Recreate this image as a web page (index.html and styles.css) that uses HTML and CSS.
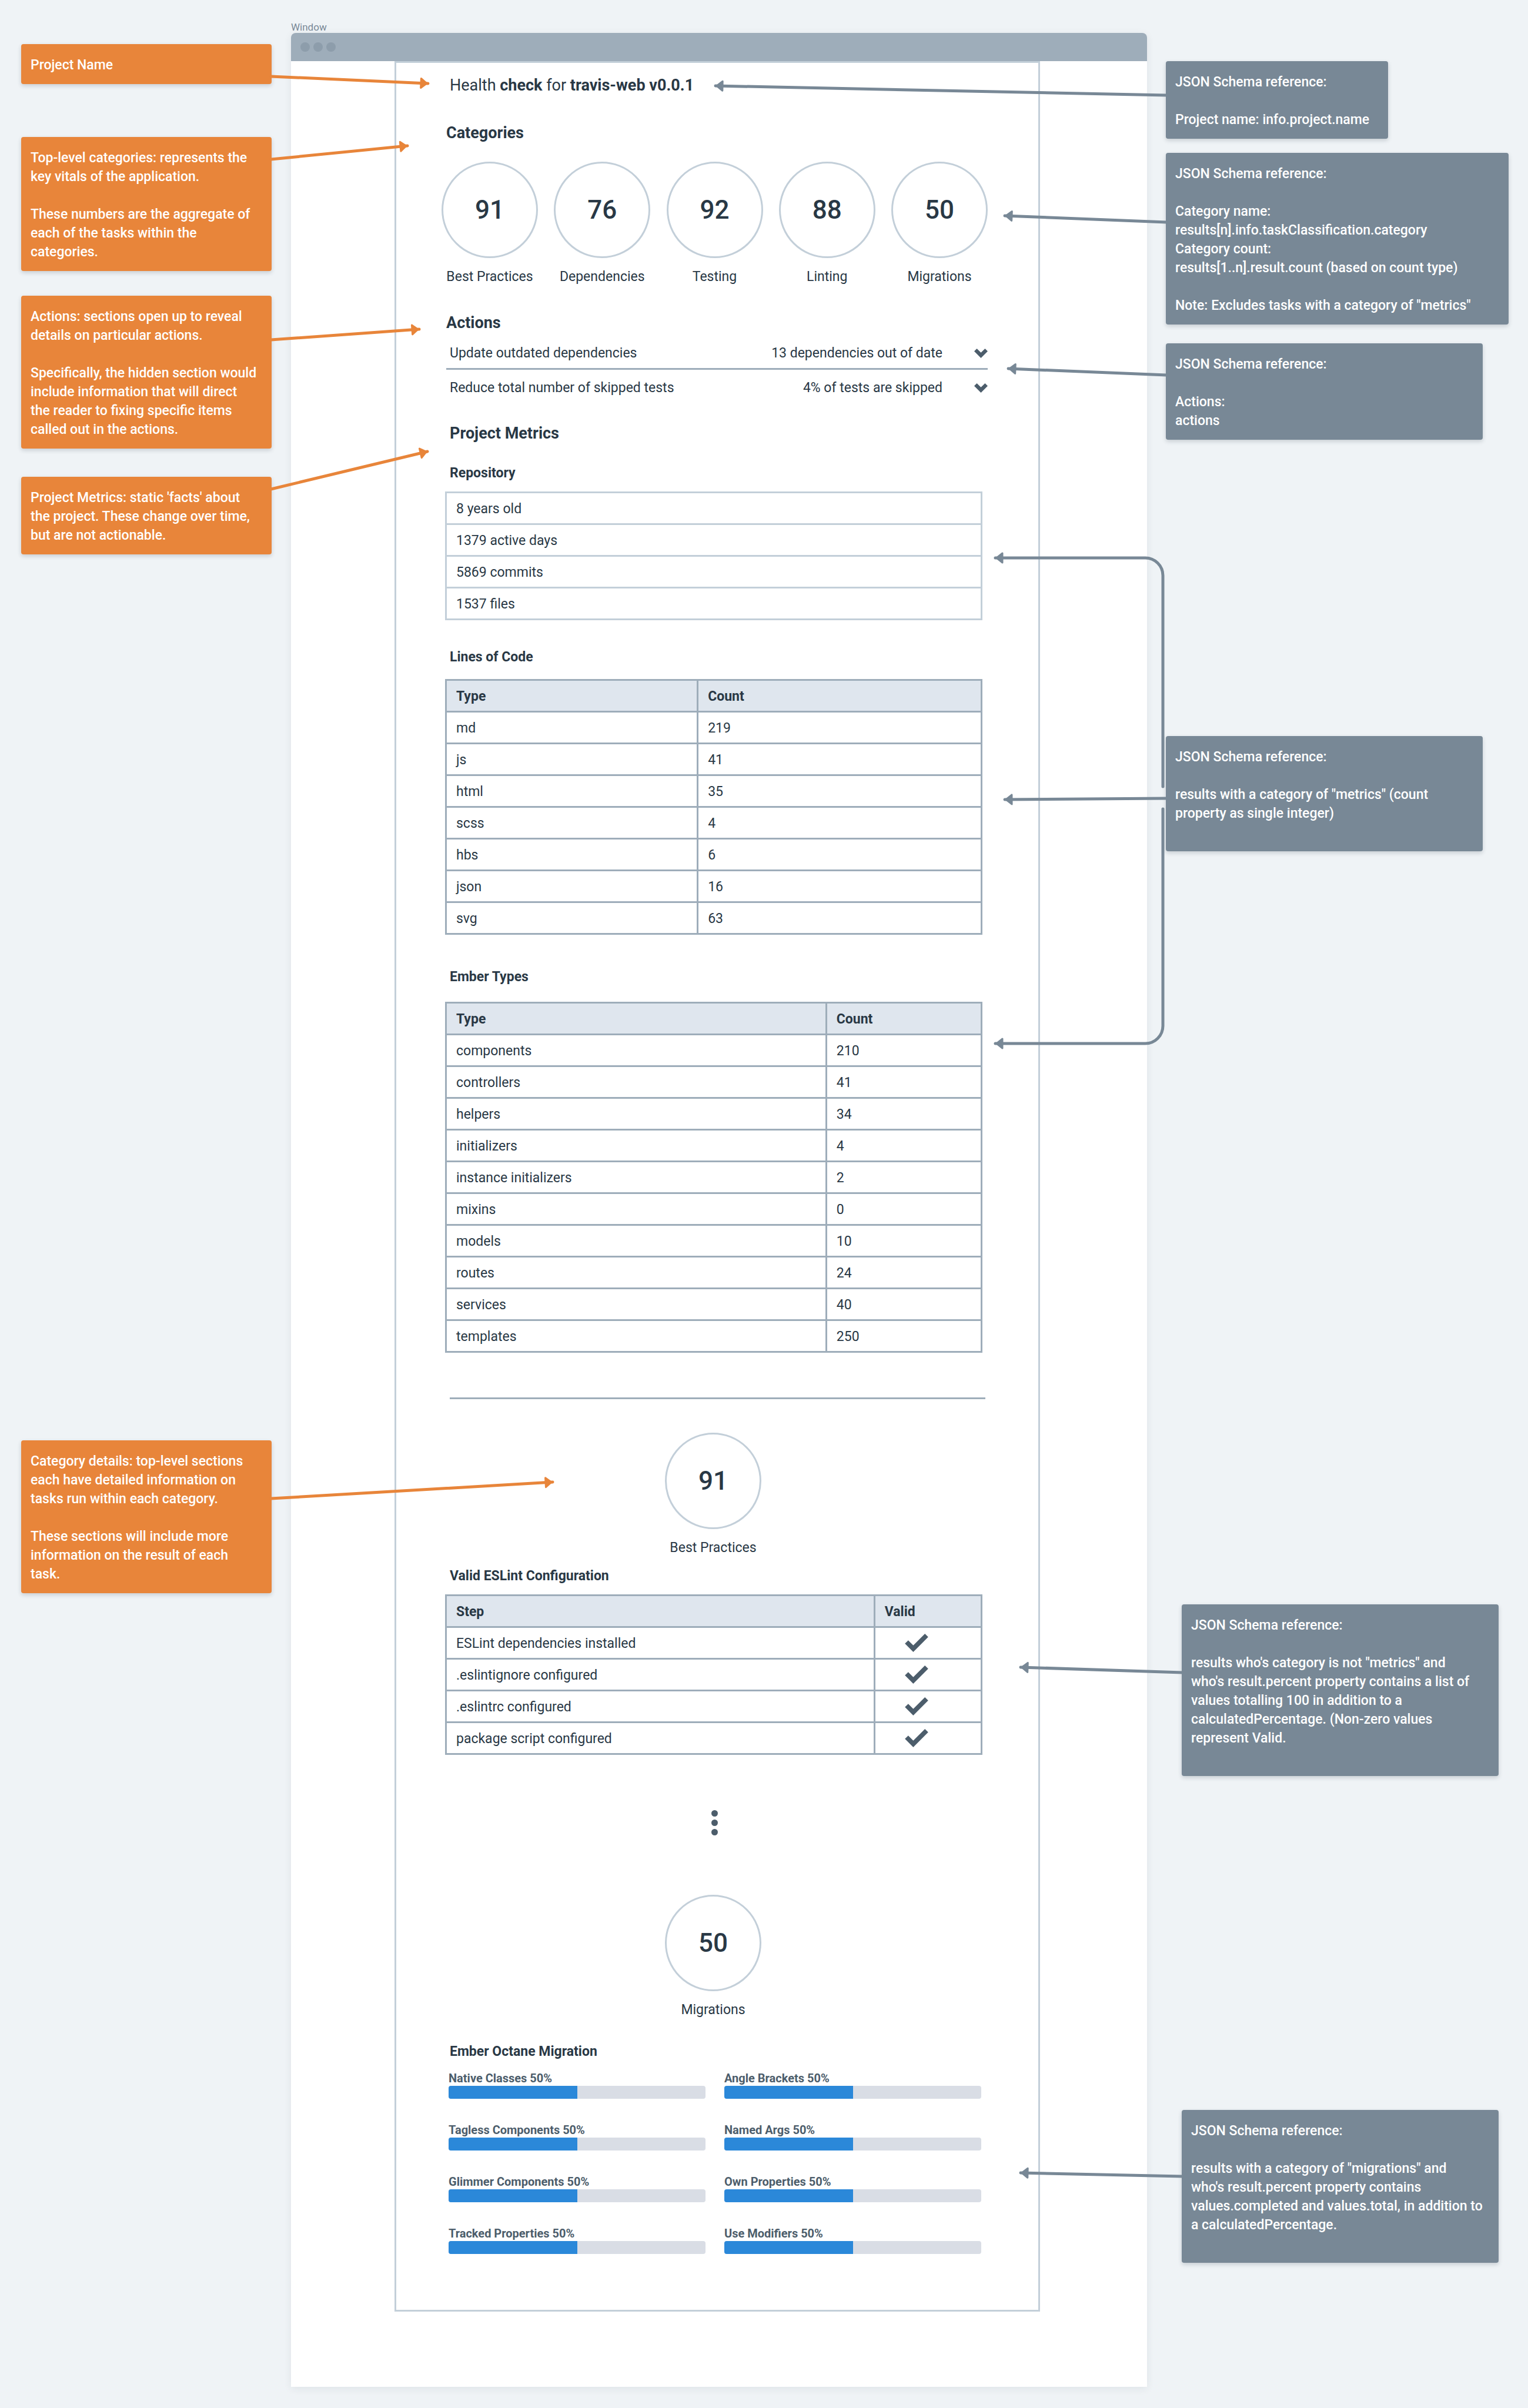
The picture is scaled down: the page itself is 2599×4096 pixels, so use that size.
FILE: index.html
```html
<!DOCTYPE html>
<html lang="en">
<head>
<meta charset="utf-8">
<title>Health check for travis-web</title>
<link rel="stylesheet" href="styles.css">
</head>
<body>
<div class="board">
  <aside class="notes notes-left">
    <div class="note orange gap-name"><p>Project Name</p></div>
    <div class="note orange gap-categories">
      <p>Top-level categories: represents the<br>key vitals of the application.</p>
      <p>These numbers are the aggregate of<br>each of the tasks within the<br>categories.</p>
    </div>
    <div class="note orange gap-actions">
      <p>Actions: sections open up to reveal<br>details on particular actions.</p>
      <p>Specifically, the hidden section would<br>include information that will direct<br>the reader to fixing specific items<br>called out in the actions.</p>
    </div>
    <div class="note orange gap-metrics">
      <p>Project Metrics: static 'facts' about<br>the project. These change over time,<br>but are not actionable.</p>
    </div>
    <div class="note orange gap-details">
      <p>Category details: top-level sections<br>each have detailed information on<br>tasks run within each category.</p>
      <p>These sections will include more<br>information on the result of each<br>task.</p>
    </div>
  </aside>

  <main class="stage">
    <div class="window-label">Window</div>
    <div class="window">
      <div class="titlebar"><span class="light"></span><span class="light"></span><span class="light"></span></div>
      <div class="report">
        <h1 class="title">Health <strong>check</strong> for <strong>travis-web v0.0.1</strong></h1>

        <h2 class="heading heading-categories">Categories</h2>
        <div class="scores">
          <div class="score"><div class="ring">91</div><div class="score-name">Best Practices</div></div>
          <div class="score"><div class="ring">76</div><div class="score-name">Dependencies</div></div>
          <div class="score"><div class="ring">92</div><div class="score-name">Testing</div></div>
          <div class="score"><div class="ring">88</div><div class="score-name">Linting</div></div>
          <div class="score"><div class="ring">50</div><div class="score-name">Migrations</div></div>
        </div>

        <h2 class="heading heading-actions">Actions</h2>
        <ul class="actions">
          <li class="action">
            <span class="action-name">Update outdated dependencies</span>
            <span>13 dependencies out of date</span>
            <button class="expand" type="button" aria-label="Show outdated dependencies"><svg class="chevron" viewBox="0 0 33 23"><path d="M6.5 0 16.500 9.700 26.500 0 33 6.500 16.500 23 0 6.500z"/></svg></button>
          </li>
          <li class="action">
            <span class="action-name">Reduce total number of skipped tests</span>
            <span>4% of tests are skipped</span>
            <button class="expand" type="button" aria-label="Show skipped tests"><svg class="chevron" viewBox="0 0 33 23"><path d="M6.5 0 16.500 9.700 26.500 0 33 6.500 16.500 23 0 6.500z"/></svg></button>
          </li>
        </ul>

        <h2 class="heading heading-metrics">Project Metrics</h2>

        <h3 class="subheading sub-repository">Repository</h3>
        <table class="grid grid-pale">
          <tbody>
            <tr><td>8 years old</td></tr>
            <tr><td>1379 active days</td></tr>
            <tr><td>5869 commits</td></tr>
            <tr><td>1537 files</td></tr>
          </tbody>
        </table>

        <h3 class="subheading sub-lines">Lines of Code</h3>
        <table class="grid grid-lines">
          <thead><tr><th class="col-lines">Type</th><th>Count</th></tr></thead>
          <tbody>
            <tr><td>md</td><td>219</td></tr>
            <tr><td>js</td><td>41</td></tr>
            <tr><td>html</td><td>35</td></tr>
            <tr><td>scss</td><td>4</td></tr>
            <tr><td>hbs</td><td>6</td></tr>
            <tr><td>json</td><td>16</td></tr>
            <tr><td>svg</td><td>63</td></tr>
          </tbody>
        </table>

        <h3 class="subheading sub-types">Ember Types</h3>
        <table class="grid grid-types">
          <thead><tr><th class="col-types">Type</th><th>Count</th></tr></thead>
          <tbody>
            <tr><td>components</td><td>210</td></tr>
            <tr><td>controllers</td><td>41</td></tr>
            <tr><td>helpers</td><td>34</td></tr>
            <tr><td>initializers</td><td>4</td></tr>
            <tr><td>instance initializers</td><td>2</td></tr>
            <tr><td>mixins</td><td>0</td></tr>
            <tr><td>models</td><td>10</td></tr>
            <tr><td>routes</td><td>24</td></tr>
            <tr><td>services</td><td>40</td></tr>
            <tr><td>templates</td><td>250</td></tr>
          </tbody>
        </table>

        <hr class="divider">

        <div class="score score-single score-practices"><div class="ring">91</div><div class="score-name">Best Practices</div></div>
        <h3 class="subheading sub-eslint">Valid ESLint Configuration</h3>
        <table class="grid">
          <thead><tr><th class="col-step">Step</th><th>Valid</th></tr></thead>
          <tbody>
            <tr><td>ESLint dependencies installed</td><td class="valid"><svg class="check" viewBox="0 0 60 47" role="img" aria-label="Valid"><path d="M51.500 0 60 8.500 21.500 47 0 25.500 8.500 17 21.500 30z"/></svg></td></tr>
            <tr><td>.eslintignore configured</td><td class="valid"><svg class="check" viewBox="0 0 60 47" role="img" aria-label="Valid"><path d="M51.500 0 60 8.500 21.500 47 0 25.500 8.500 17 21.500 30z"/></svg></td></tr>
            <tr><td>.eslintrc configured</td><td class="valid"><svg class="check" viewBox="0 0 60 47" role="img" aria-label="Valid"><path d="M51.500 0 60 8.500 21.500 47 0 25.500 8.500 17 21.500 30z"/></svg></td></tr>
            <tr><td>package script configured</td><td class="valid"><svg class="check" viewBox="0 0 60 47" role="img" aria-label="Valid"><path d="M51.500 0 60 8.500 21.500 47 0 25.500 8.500 17 21.500 30z"/></svg></td></tr>
          </tbody>
        </table>

        <div class="more"><span class="dot"></span><span class="dot"></span><span class="dot"></span></div>

        <div class="score score-single score-migrations"><div class="ring">50</div><div class="score-name">Migrations</div></div>
        <h3 class="subheading sub-octane">Ember Octane Migration</h3>
        <div class="migrations">
          <div class="migration"><label for="m1">Native Classes 50%</label><progress id="m1" value="50" max="100"></progress></div>
          <div class="migration"><label for="m2">Angle Brackets 50%</label><progress id="m2" value="50" max="100"></progress></div>
          <div class="migration"><label for="m3">Tagless Components 50%</label><progress id="m3" value="50" max="100"></progress></div>
          <div class="migration"><label for="m4">Named Args 50%</label><progress id="m4" value="50" max="100"></progress></div>
          <div class="migration"><label for="m5">Glimmer Components 50%</label><progress id="m5" value="50" max="100"></progress></div>
          <div class="migration"><label for="m6">Own Properties 50%</label><progress id="m6" value="50" max="100"></progress></div>
          <div class="migration"><label for="m7">Tracked Properties 50%</label><progress id="m7" value="50" max="100"></progress></div>
          <div class="migration"><label for="m8">Use Modifiers 50%</label><progress id="m8" value="50" max="100"></progress></div>
        </div>
      </div>
    </div>
  </main>

  <aside class="notes notes-right">
    <div class="note slate narrow gap-schema-name">
      <p>JSON Schema reference:</p>
      <p>Project name: info.project.name</p>
    </div>
    <div class="note slate wide gap-schema-category">
      <p>JSON Schema reference:</p>
      <p>Category name:<br>results[n].info.taskClassification.category<br>Category count:<br>results[1..n].result.count (based on count type)</p>
      <p>Note: Excludes tasks with a category of "metrics"</p>
    </div>
    <div class="note slate gap-schema-actions">
      <p>JSON Schema reference:</p>
      <p>Actions:<br>actions</p>
    </div>
    <div class="note slate spare-line gap-schema-metrics">
      <p>JSON Schema reference:</p>
      <p>results with a category of "metrics" (count<br>property as single integer)</p>
    </div>
    <div class="note slate spare-line indented gap-schema-percent">
      <p>JSON Schema reference:</p>
      <p>results who's category is not "metrics" and<br>who's result.percent property contains a list of<br>values totalling 100 in addition to a<br>calculatedPercentage. (Non-zero values<br>represent Valid.</p>
    </div>
    <div class="note slate spare-line indented gap-schema-migrations">
      <p>JSON Schema reference:</p>
      <p>results with a category of "migrations" and<br>who's result.percent property contains<br>values.completed and values.total, in addition to<br>a calculatedPercentage.</p>
    </div>
  </aside>

  <svg class="arrows" viewBox="0 0 2599 4096" aria-hidden="true">
    <defs>
      <marker id="tip-orange" markerUnits="userSpaceOnUse" markerWidth="18" markerHeight="24" refX="15" refY="12" orient="auto">
        <path d="M3 4 13 12 3 20z" fill="#e8853a" stroke="#e8853a" stroke-width="3" stroke-linejoin="round"/>
      </marker>
      <marker id="tip-slate" markerUnits="userSpaceOnUse" markerWidth="18" markerHeight="24" refX="15" refY="12" orient="auto">
        <path d="M3 4 13 12 3 20z" fill="#788896" stroke="#788896" stroke-width="3" stroke-linejoin="round"/>
      </marker>
    </defs>
    <g class="arrows-orange">
      <path d="M461 130 728 142"/>
      <path d="M461 271 693 248"/>
      <path d="M461 578 713 560"/>
      <path d="M461 832 727 768"/>
      <path d="M461 2549 940 2521"/>
    </g>
    <g class="arrows-slate">
      <path d="M1984 162 1217 146"/>
      <path d="M1984 378 1709 367"/>
      <path d="M1984 638 1715 627"/>
      <path d="M1978 1338V979A30 30 0 0 0 1948 949H1693"/>
      <path d="M1984 1358 1709 1360"/>
      <path d="M1978 1376V1745A30 30 0 0 1 1948 1775H1693"/>
      <path d="M2011 2845 1736 2836"/>
      <path d="M2011 3702 1736 3696"/>
    </g>
  </svg>
</div>
</body>
</html>
```
FILE: styles.css
```css
:root {
  --ink: #293845;
  --line: #9eadba;
  --line-pale: #c3cfd9;
  --orange: #e8853a;
  --slate: #788896;
  --icon: #4c5d6b;
}

* { box-sizing: border-box; }

body {
  margin: 0;
  background: #eff3f6;
  color: var(--ink);
  font: 23px/32px Roboto, "Liberation Sans", sans-serif;
}

h1, h2, h3, p, ul { margin: 0; padding: 0; }

.board {
  position: relative;
  display: grid;
  grid-template-columns: 495fr 1456fr 648fr;
  padding-bottom: 34px;
}

/* Annotations on either side of the window */
.notes { display: flex; flex-direction: column; }
.notes-left { padding: 0 33px 0 36px; }
.notes-right { padding-left: 32px; }

.note {
  width: 100%;
  padding: 20px 0 16px 16px;
  border-radius: 4px;
  color: #fff;
  font-weight: 500;
  white-space: nowrap;
  box-shadow: 0 3px 7px rgba(40, 56, 70, 0.2);
}
.note p + p { margin-top: 32px; }
.orange { background: var(--orange); }
.slate { background: var(--slate); max-width: 539px; }
.narrow { max-width: 378px; }
.wide { max-width: 583px; }
.indented { margin-left: 27px; }
.spare-line { padding-bottom: 48px; }

.gap-name { margin-top: 75px; }
.gap-categories { margin-top: 90px; }
.gap-actions { margin-top: 42px; }
.gap-metrics { margin-top: 48px; }
.gap-details { margin-top: 1507px; }
.gap-schema-name { margin-top: 104px; }
.gap-schema-category { margin-top: 24px; }
.gap-schema-actions { margin-top: 32px; }
.gap-schema-metrics { margin-top: 504px; }
.gap-schema-percent { margin-top: 1281px; }
.gap-schema-migrations { margin-top: 568px; }

/* Window */
.stage { padding-top: 36px; }
.window-label {
  color: var(--slate);
  font-size: 17px;
  line-height: 20px;
}
.window {
  padding-bottom: 128px;
  border-radius: 8px 8px 0 0;
  background: #fff;
  box-shadow: 0 3px 14px rgba(40, 56, 70, 0.08);
}
.titlebar {
  display: flex;
  align-items: center;
  gap: 6px;
  height: 48px;
  padding: 0 16px;
  border-radius: 8px 8px 0 0;
  background: #9eadba;
}
.light { width: 16px; height: 16px; border-radius: 50%; background: #8d9dab; }

.report {
  margin: 0 182px 0 176px;
  padding: 22px 86px 95px 77px;
  border: 3px solid var(--line-pale);
}
.title { padding-left: 14px; font-size: 27px; font-weight: 400; line-height: 32px; }
.heading { padding-left: 8px; font-size: 27px; font-weight: 700; line-height: 32px; }
.heading-categories { margin-top: 49px; }
.heading-actions { margin-top: 46px; }
.heading-metrics { margin-top: 36px; padding-left: 14px; }
.subheading { padding-left: 14px; font-size: 23px; font-weight: 700; line-height: 32px; }
.sub-repository { margin: 36px 0 15px; }
.sub-lines { margin: 47px 0 21px; }
.sub-types { margin: 56px 0 26px; }
.sub-eslint { margin: 16px 0 15px; }
.sub-octane { margin: 39px 0 16px; }

/* Scores */
.scores { display: flex; justify-content: space-between; margin-top: 33px; }
.score { display: flex; flex-direction: column; align-items: center; gap: 16px; }
.scores .score { width: 164px; }
.score-single { margin-right: 5px; }
.score-practices { margin-top: 57px; }
.score-migrations { margin-top: 101px; }
.ring {
  display: flex;
  align-items: center;
  justify-content: center;
  width: 164px;
  height: 164px;
  border: 3px solid var(--line-pale);
  border-radius: 50%;
  font-size: 44px;
  font-weight: 500;
}
.score-name { white-space: nowrap; }

/* Actions */
.actions { margin: 5px 0 0 8px; list-style: none; }
.action {
  display: flex;
  align-items: center;
  padding: 15px 0 9px 6px;
}
.action + .action { border-top: 3px solid var(--line); }
.action-name { flex: 1; }
.expand {
  display: flex;
  margin-left: 54px;
  padding: 0;
  border: 0;
  background: none;
}
.chevron { width: 23px; height: 16px; fill: var(--icon); }

/* Tables */
.grid {
  width: calc(100% - 15px);
  margin-left: 6px;
  border-collapse: collapse;
  table-layout: fixed;
}
.grid th, .grid td {
  padding: 11px 16px 8px;
  border: 3px solid var(--line);
  text-align: left;
}
.grid th { background: #dfe6ee; font-weight: 700; }
.grid-pale td { border-color: var(--line-pale); }
.col-lines { width: 47%; }
.col-types { width: 71%; }
.col-step { width: 80%; }
.grid .valid { padding: 0 16px 0 50px; }
.check { display: block; width: 40px; height: 31px; fill: var(--icon); }

.divider {
  height: 3px;
  margin: 76px 4px 0 14px;
  border: 0;
  background: var(--line);
}

.more {
  display: flex;
  flex-direction: column;
  align-items: center;
  gap: 5px;
  margin-top: 94px;
}
.dot { width: 11px; height: 11px; border-radius: 50%; background: var(--icon); }

/* Migration progress */
.migrations {
  display: grid;
  grid-template-columns: 1fr 1fr;
  gap: 40px 32px;
  margin: 0 11px 0 12px;
}
.migration { display: flex; flex-direction: column; }
.migration label {
  color: var(--icon);
  font-size: 20px;
  font-weight: 700;
  line-height: 26px;
}
progress {
  width: 100%;
  height: 22px;
  border: 0;
  border-radius: 4px;
  overflow: hidden;
  background: #d9dde5;
  appearance: none;
}
progress::-webkit-progress-bar { background: #d9dde5; }
progress::-webkit-progress-value { background: #2b88d9; }

/* Arrows laid over the notes and the window */
.arrows {
  position: absolute;
  top: 0;
  left: 0;
  width: 100%;
  pointer-events: none;
}
.arrows path { stroke-linecap: round; }
.arrows-orange path { fill: none; stroke: var(--orange); stroke-width: 5px; marker-end: url(#tip-orange); }
.arrows-slate path { fill: none; stroke: var(--slate); stroke-width: 5px; marker-end: url(#tip-slate); }
```
